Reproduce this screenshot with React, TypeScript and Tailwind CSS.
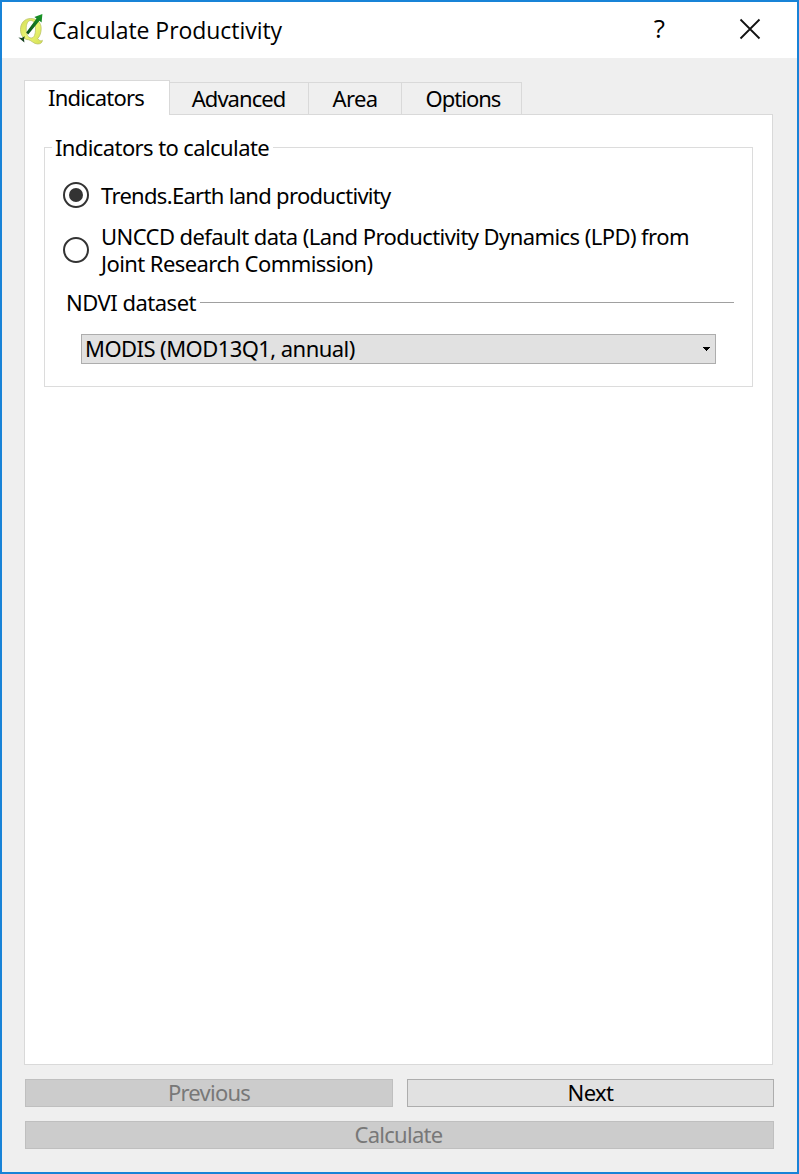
function QgisLogo() {
  return (
    <svg width="26" height="32" viewBox="0.8 0 26 32" className="mt-0.5" aria-hidden="true">
      <defs>
        <linearGradient id="leaf" x1="0" y1="0" x2="1" y2="1">
          <stop offset="0" stopColor="#d2dc58" />
          <stop offset="0.5" stopColor="#edf672" />
          <stop offset="1" stopColor="#d3df55" />
        </linearGradient>
        <linearGradient id="shaft" x1="1" y1="0" x2="0" y2="1">
          <stop offset="0" stopColor="#1a9a28" />
          <stop offset="1" stopColor="#0b4a19" />
        </linearGradient>
      </defs>
      <path
        fillRule="evenodd"
        d="M13.500 4.500C7 4.500 3.300 9.500 3.300 15.500C3.300 21.500 6.500 25.500 11.500 25.800C14.500 26.500 16.500 30 20.500 30C23.500 30 25.200 28.500 25.200 26.300C24 27.300 22 27 20.500 24.500C22.700 22.500 24 18.500 24 14.500C24 8.500 20 4.500 13.500 4.500ZM13.500 6.500C17 6.500 18.300 10 18.300 15C18.300 20 17 24 14 24C10.500 24 9 20 9 15C9 10 10.500 6.500 13.500 6.500Z"
        fill="url(#leaf)"
        stroke="#b4bd62"
        strokeWidth="0.700"
      />
      <path d="M25.200 0L24.400 8.500L22.300 6.700L11 20.500L9 18.500L19.300 4.500L17.200 3Z" fill="url(#shaft)" />
      <path d="M1.200 23.500L4.400 24L7.700 22.300L6.800 25L7.200 28.500L4.800 26.500Z" fill="#16401f" />
    </svg>
  );
}

function Radio({ checked }: { checked?: boolean }) {
  return (
    <span className="flex size-[26px] shrink-0 items-center justify-center rounded-full border-2 border-[#333333] bg-white">
      {checked && <span className="size-[14px] rounded-full bg-[#333333]" />}
    </span>
  );
}

export default function App() {
  return (
    <div className="flex h-[1174px] w-[799px] flex-col border-2 border-[#1883d7] bg-[#efefef] font-['Noto_Sans',sans-serif] text-[22px] leading-[27px] text-black">
      <header className="flex h-14 shrink-0 items-center bg-white pb-0.5 pl-4">
        <QgisLogo />
        <h1 className="ml-2 flex-1 pt-[3px] font-['Open_Sans',sans-serif] text-[23px] tracking-[-0.05px]">Calculate Productivity</h1>
        <button className="mr-[74px] pb-px font-['Open_Sans',sans-serif] text-[26px] font-medium">?</button>
        <button className="mr-[36px]" aria-label="Close">
          <svg width="22" height="22" viewBox="0 0 22 22" stroke="#111" strokeWidth="1.800"><path d="M1.500 1.500L20.500 20.500M20.500 1.500L1.500 20.500" /></svg>
        </button>
      </header>
      <nav className="z-10 mt-[22px] -mb-px ml-[22px] flex h-[35px] shrink-0 items-end">
        <button className="h-[35px] w-[146px] border border-b-0 border-[#d9d9d9] bg-white pr-0.5 pb-0.5 tracking-[-0.8px]">Indicators</button>
        <button className="h-[33px] w-[139px] border border-l-0 border-[#d9d9d9] pr-px tracking-[-0.95px]">Advanced</button>
        <button className="h-[33px] w-[93px] border border-l-0 border-[#d9d9d9] tracking-[-0.6px]">Area</button>
        <button className="h-[33px] w-[120px] border border-l-0 border-[#d9d9d9] pl-[3px] tracking-[-1px]">Options</button>
      </nav>
      <main className="mx-[22px] h-[951px] w-[749px] shrink-0 border border-[#d9d9d9] bg-white px-[19px] pt-[19px]">
        <fieldset className="h-[253px] w-[709px] border border-[#dcdcdc] pl-[7px]">
          <legend className="h-[27px] pr-1 pl-[3px] tracking-[-0.6px]">Indicators to calculate</legend>
          <div className="pl-[11px]">
            <label className="mt-[21px] flex items-start gap-3">
              <Radio checked />
              <span className="tracking-[-0.69px]">Trends.Earth land productivity</span>
            </label>
            <label className="mt-[14px] flex items-center gap-3">
              <Radio />
              <span className="tracking-[-0.57px]">UNCCD default data (Land Productivity Dynamics (LPD) from<br />Joint Research Commission)</span>
            </label>
          </div>
          <div className="mt-3 mr-[18px] flex items-center pl-[14px]">
            <span className="tracking-[-0.5px]">NDVI dataset</span>
            <span className="ml-1 h-px flex-1 bg-[#a0a0a0]" />
          </div>
          <button className="mt-[18px] ml-[29px] flex h-[30px] w-[635px] items-center justify-between border border-[#adadad] bg-[#e1e1e1] pr-[5px] pl-[3px]">
            <span className="pb-0.5 leading-[26px] tracking-[-0.56px]">MODIS (MOD13Q1, annual)</span>
            <svg width="7" height="4" viewBox="0 0 7 4" shapeRendering="crispEdges" aria-hidden="true"><path d="M0 0H7V1H6V2H5V3H4V4H3V3H2V2H1V1H0Z" /></svg>
          </button>
        </fieldset>
      </main>
      <footer className="mt-[14px] ml-[23px] grid w-[749px] grid-cols-[368px_367px] gap-[14px]">
        <button className="h-7 border border-[#bfbfbf] bg-[#cccccc] pb-0.5 leading-6 tracking-[-0.75px] text-[#787878]">Previous</button>
        <button className="h-7 border border-[#adadad] bg-[#e1e1e1] pb-0.5 leading-6 tracking-[-0.6px]">Next</button>
        <button className="col-span-2 h-7 border border-[#bfbfbf] bg-[#cccccc] pr-0.5 pb-0.5 leading-6 tracking-[-0.7px] text-[#787878]">Calculate</button>
      </footer>
    </div>
  );
}
